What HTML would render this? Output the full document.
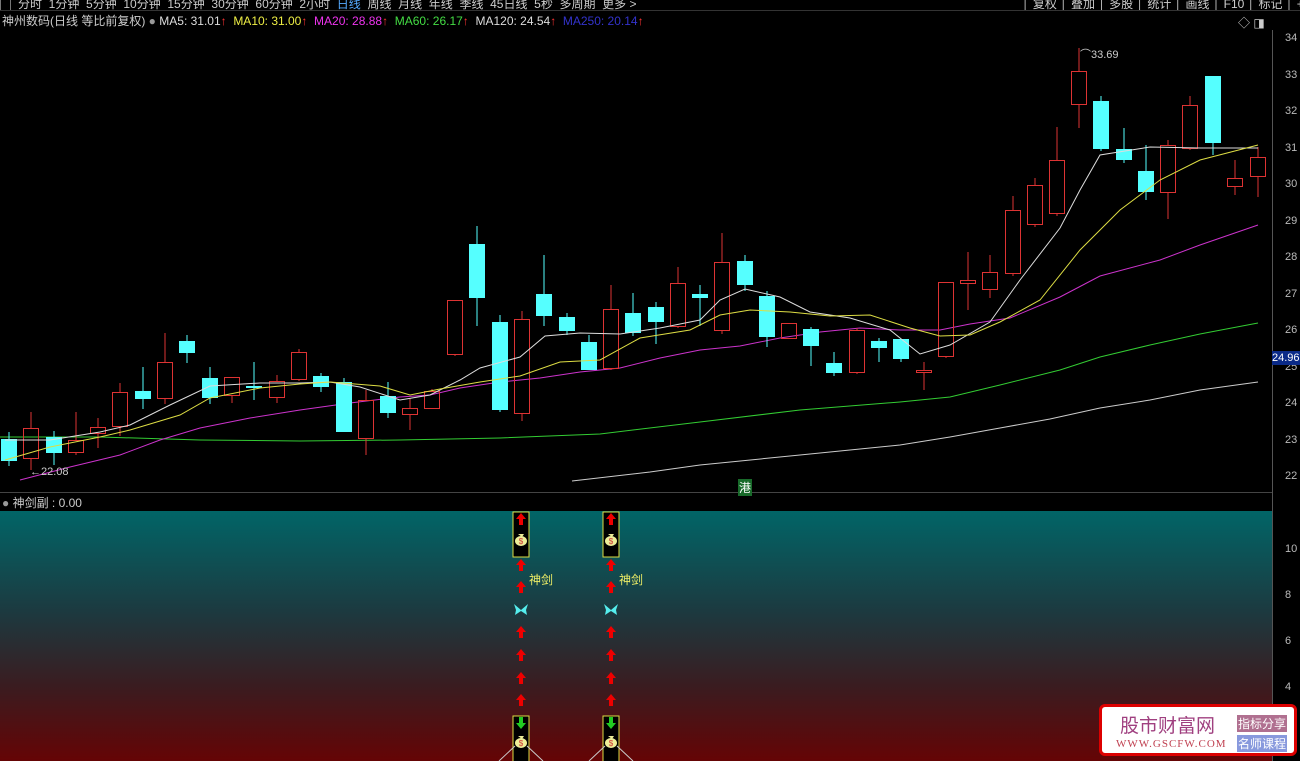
<!DOCTYPE html><html><head><meta charset="utf-8"><style>
body{margin:0;width:1300px;height:761px;background:#000;overflow:hidden;position:relative;font-family:"Liberation Sans","Noto Sans CJK SC",sans-serif;color:#ccc}
.a{position:absolute;white-space:nowrap}
</style></head><body>
<div class="a" style="left:0;top:-5px;font-size:12px;color:#ccc;width:1300px;height:15px;border-bottom:1px solid #333;overflow:hidden">
<span style="border:1px solid #777;padding:0 3px">&nbsp;</span> &nbsp;分时 &nbsp;1分钟 &nbsp;5分钟 &nbsp;10分钟 &nbsp;15分钟 &nbsp;30分钟 &nbsp;60分钟 &nbsp;2小时 &nbsp;<span style="color:#5af">日线</span> &nbsp;周线 &nbsp;月线 &nbsp;年线 &nbsp;季线 &nbsp;45日线 &nbsp;5秒 &nbsp;多周期 &nbsp;更多 &gt;
<span class="a" style="left:1022px;top:0;letter-spacing:0">│ 复权 │ 叠加 │ 多股 │ 统计 │ 画线 │ F10 │ 标记 │ +自选 │ 返</span></div>
<div class="a" style="left:2px;top:12px;font-size:12px"><span style="color:#ccc">神州数码(日线 等比前复权)</span> <span style="color:#999">●</span> <span style="color:#ddd">MA5: 31.01<b style="color:#f33">↑</b></span> &nbsp;<span style="color:#ee4">MA10: 31.00<b style="color:#f33">↑</b></span> &nbsp;<span style="color:#e3e">MA20: 28.88<b style="color:#f33">↑</b></span> &nbsp;<span style="color:#4d4">MA60: 26.17<b style="color:#f33">↑</b></span> &nbsp;<span style="color:#ddd">MA120: 24.54<b style="color:#f33">↑</b></span> &nbsp;<span style="color:#33c">MA250: 20.14</span><b style="color:#f33">↑</b></div>
<div class="a" style="left:1238px;top:14px;font-size:12px;color:#ccc">◇ ◨</div>
<div class="a" style="left:1272px;top:30px;width:1px;height:731px;background:#555"></div>
<div class="a" style="left:0;top:492px;width:1272px;height:1px;background:#444"></div>
<div class="a" style="left:1285px;font-size:11px;line-height:36.5px;color:#bbb;top:20px">34<br>33<br>32<br>31<br>30<br>29<br>28<br>27<br>26<br>25<br>24<br>23<br>22</div>
<div class="a" style="left:1272px;top:351px;width:28px;height:14px;background:#0a2a88;color:#fff;font-size:11px;line-height:14px">24.96</div>
<svg class="a" style="left:0;top:0" width="1272" height="492" id="k"></svg>
<div class="a" style="left:30px;top:466px;font-size:11px;color:#ccc">←22.08</div>
<div class="a" style="left:1080px;top:46px;font-size:11px;color:#ccc">⌒33.69</div>
<div class="a" style="left:738px;top:479px;font-size:12px;color:#fff;background:#186a2a;padding:0 1px">港</div>
<div class="a" style="left:2px;top:494px;font-size:12px;color:#ccc"><span style="color:#999">●</span> 神剑副 : 0.00</div>
<div class="a" style="left:0;top:511px;width:1272px;height:250px;background:linear-gradient(#016567,#1c3a40 40%,#3a1c20 70%,#650405)"></div>
<div class="a" style="left:1285px;top:526px;font-size:11px;line-height:46px;color:#bbb">10<br>8<br>6<br>4</div>
<svg class="a" style="left:0;top:511px" width="1272" height="250" id="s"></svg>
<div class="a" style="left:529px;top:571px;font-size:12px;color:#ee6">神剑</div>
<div class="a" style="left:619px;top:571px;font-size:12px;color:#ee6">神剑</div>
<div class="a" style="left:1099px;top:704px;width:198px;height:52px;background:#fff;border:3px solid #d00;border-radius:6px;box-sizing:border-box">
<div class="a" style="left:18px;top:4px;font-size:19px;color:#a04080;font-family:'Noto Sans CJK SC',sans-serif">股市财富网</div>
<div class="a" style="left:14px;top:31px;font-size:11px;color:#c04050;font-family:'Liberation Serif',serif;letter-spacing:1px">WWW.GSCFW.COM</div>
<div class="a" style="left:135px;top:8px;font-size:12px;color:#fff;background:#b07090;padding:0 1px">指标分享</div>
<div class="a" style="left:135px;top:28px;font-size:12px;color:#fff;background:#8899dd;padding:0 1px">名师课程</div></div>
<script>
var d=[[9,439,461,432,466,'c'],[31,428,458,412,470,'r'],[54,437,453,431,465,'c'],[76,440,452,412,455,'r'],[98,427,433,418,448,'r'],[120,392,426,383,436,'r'],[143,391,399,367,409,'c'],[165,362,398,333,404,'r'],[187,341,353,335,363,'c'],[210,378,398,367,404,'c'],[232,377,395,377,403,'r'],[254,386,388,362,400,'c'],[277,381,397,375,403,'r'],[299,352,379,349,381,'r'],[321,376,387,373,392,'c'],[344,382,432,378,432,'c'],[366,400,438,390,455,'r'],[388,396,413,382,418,'c'],[410,408,414,398,430,'r'],[432,391,408,389,409,'r'],[455,300,354,300,356,'r'],[477,244,298,226,326,'c'],[500,322,410,315,412,'c'],[522,319,413,311,421,'r'],[544,294,316,255,326,'c'],[567,317,331,313,335,'c'],[589,342,370,335,370,'c'],[611,309,368,285,370,'r'],[633,313,333,293,336,'c'],[656,307,322,302,344,'c'],[678,283,326,267,328,'r'],[700,294,298,285,326,'c'],[722,262,330,233,334,'r'],[745,261,285,255,291,'c'],[767,296,337,291,347,'c'],[789,323,338,323,338,'r'],[811,329,346,327,366,'c'],[834,363,373,352,376,'c'],[857,330,372,328,374,'r'],[879,341,348,338,362,'c'],[901,339,359,339,362,'c'],[924,370,372,362,390,'r'],[946,282,356,282,358,'r'],[968,280,283,252,310,'r'],[990,272,289,255,298,'r'],[1013,210,273,196,276,'r'],[1035,185,224,178,227,'r'],[1057,160,213,127,216,'r'],[1079,71,104,48,128,'r'],[1101,101,149,96,151,'c'],[1124,149,160,128,163,'c'],[1146,171,192,145,200,'c'],[1168,145,192,140,219,'r'],[1190,105,148,96,150,'r'],[1213,76,143,76,155,'c'],[1235,178,186,160,195,'r'],[1258,157,176,147,197,'r']];
var h='';
function pl(p,c){h+='<polyline fill="none" stroke="'+c+'" stroke-width="1" points="'+p+'"/>';}
pl('572,481 650,472 700,465 800,455 900,445 950,437 1000,428 1050,419 1100,408 1150,400 1200,390 1258,382','#ccc');
pl('0,437 100,437 200,440 300,441 400,440 500,438 600,434 700,422 800,410 900,402 950,397 1000,385 1060,370 1100,357 1150,345 1200,334 1258,323','#3c3');
pl('20,480 70,467 120,455 160,440 200,428 250,418 300,410 350,403 400,397 430,395 460,388 500,382 540,378 580,372 620,368 660,358 700,350 740,346 780,338 820,332 860,328 900,330 940,330 970,324 1010,318 1060,297 1100,276 1160,260 1200,245 1258,225','#c3c');
d.forEach(function(c){var x=c[0];if(c[5]=='c'){h+='<line x1="'+x+'" y1="'+c[3]+'" x2="'+x+'" y2="'+c[4]+'" stroke="#5ff"/><rect x="'+(x-8)+'" y="'+c[1]+'" width="16" height="'+Math.max(2,c[2]-c[1])+'" fill="#5ff"/>';}else{h+='<line x1="'+x+'" y1="'+c[3]+'" x2="'+x+'" y2="'+c[1]+'" stroke="#d33"/><line x1="'+x+'" y1="'+c[2]+'" x2="'+x+'" y2="'+c[4]+'" stroke="#d33"/><rect x="'+(x-7.5)+'" y="'+c[1]+'.5" width="15" height="'+Math.max(2,c[2]-c[1])+'" fill="none" stroke="#d33"/>';}});
pl('5,440 50,440 100,432 130,425 170,405 210,386 260,383 300,383 330,382 360,387 400,400 430,395 460,380 480,368 520,357 545,336 580,333 620,334 660,328 700,320 720,300 745,289 780,297 810,312 850,318 890,330 920,354 950,345 990,322 1020,280 1060,228 1080,190 1100,155 1150,147 1200,148 1258,148','#ddd');
pl('5,460 50,447 100,437 130,430 180,415 210,398 260,388 300,384 330,382 380,386 410,395 440,389 480,382 520,376 560,362 600,360 640,338 690,330 720,315 750,310 790,312 830,316 870,315 910,328 940,336 970,335 1000,322 1040,300 1080,250 1120,210 1160,180 1200,160 1258,145','#dd4');
document.getElementById('k').innerHTML=h;
var s='';
[521,611].forEach(function(x){
s+='<rect x="'+(x-8)+'" y="1" width="16" height="45" fill="#000" stroke="#dd4"/><rect x="'+(x-8)+'" y="205" width="16" height="50" fill="#000" stroke="#dd4"/>';
s+='<line x1="'+(x-22)+'" y1="250" x2="'+(x-6)+'" y2="235" stroke="#ccc"/><line x1="'+(x+6)+'" y1="235" x2="'+(x+22)+'" y2="250" stroke="#ccc"/>';
[8,54,76,121,144,167,189].forEach(function(y){s+='<path d="M'+x+' '+(y-6)+'l5 6h-3v6h-4v-6h-3z" fill="#e00"/>';});
s+='<path d="M'+x+' 218l5-6h-3v-6h-4v6h-3z" fill="#2c2"/>';
[30,232].forEach(function(y){s+='<path d="M'+(x-3)+' '+(y-7)+'h6l-2 3z" fill="#ee9"/><ellipse cx="'+x+'" cy="'+y+'" rx="6" ry="5" fill="#ee9"/><text x="'+x+'" y="'+(y+3)+'" font-size="8" fill="#c33" text-anchor="middle">$</text>';});
s+='<path d="M'+x+' 99L'+(x-7)+' 93L'+(x-5)+' 99L'+(x-6)+' 104L'+x+' 100L'+(x+6)+' 104L'+(x+5)+' 99L'+(x+7)+' 93Z" fill="#5ee"/>';
});
document.getElementById('s').innerHTML=s;
</script></body></html>
